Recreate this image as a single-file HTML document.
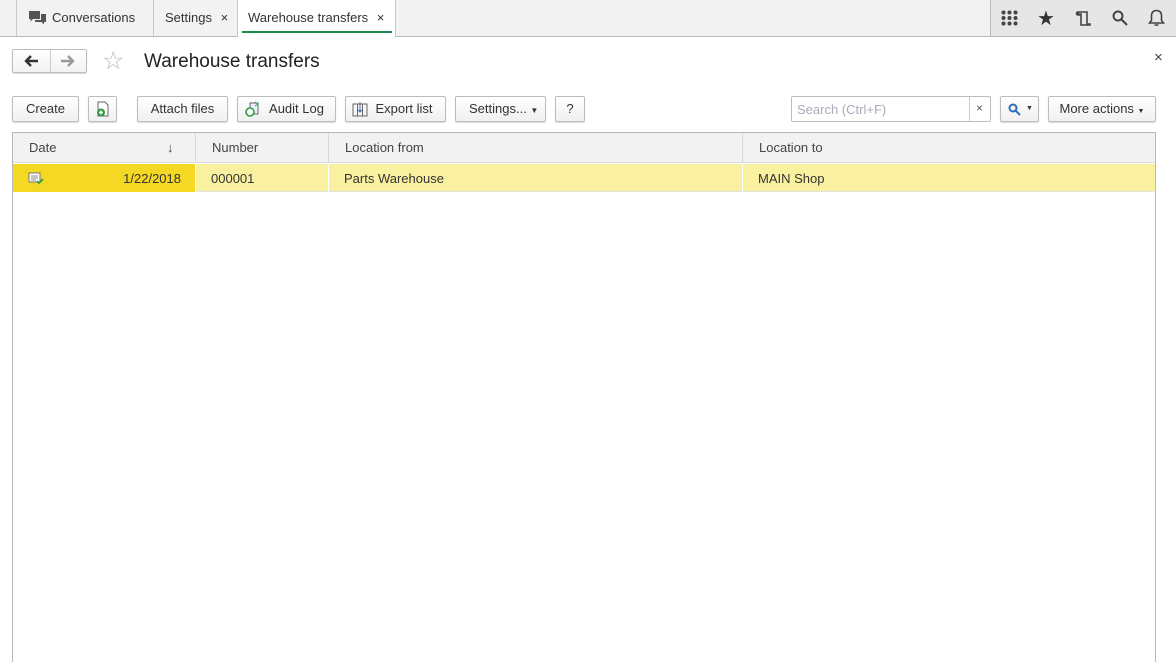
<!DOCTYPE html>
<html><head><meta charset="utf-8"><style>
*{box-sizing:border-box;margin:0;padding:0}
html,body{width:1176px;height:662px;overflow:hidden}
body{background:#fff;font-family:"Liberation Sans",Arial,sans-serif;font-size:13px;color:#333;position:relative}
.abs{position:absolute}
.tabbar{left:0;top:0;width:1176px;height:37px;background:#f2f2f2;border-bottom:1px solid #b8b8b8}
.tab{top:0;height:36px;line-height:35px;font-size:13px;color:#333;border-left:1px solid #c8c8c8;padding-left:10px}
.btn{top:96px;height:26px;border:1px solid #bdbdbd;border-radius:2px;background:linear-gradient(#fff,#f0f0f0);box-shadow:0 1px 1px rgba(0,0,0,.15);line-height:24px;text-align:center;font-size:13px;color:#333}
.th{top:133px;height:30px;line-height:29px;color:#444;border-right:1px solid #d8d8d8;padding-left:16px}
.td{top:164px;height:28px;line-height:29px;color:#333;border-right:1px solid #fff;padding-left:15px}
</style></head><body>
<div class="abs tabbar"></div>
<div class="abs tab" style="left:16px;width:138px;padding-left:12px">
<svg class="abs" style="left:12px;top:10px" width="17" height="16" viewBox="0 0 17 16"><path d="M0 1h11v8H4l-2.5 2.5V9H0z" fill="#555"/><path d="M12 4h5v8h-2v2.5L12.5 12H6v-2h6z" fill="#555"/></svg>
<span style="margin-left:23px">Conversations</span></div>
<div class="abs tab" style="left:153px;width:85px;padding-left:11px">Settings <span style="margin-left:5px">×</span></div>
<div class="abs tab" style="left:237px;width:159px;background:#fff;border-right:1px solid #c8c8c8;height:37px">Warehouse transfers <span style="margin-left:5px">×</span>
<div class="abs" style="left:4px;top:31px;width:150px;height:2px;background:#1e8c4e"></div></div>
<div class="abs" style="left:990px;top:0;width:186px;height:36px;background:#e6e6e6;border-left:1px solid #b8b8b8"></div>
<svg class="abs" style="left:1001px;top:10px" width="17" height="16" viewBox="0 0 17 16" fill="#444"><circle cx="2.5" cy="2.5" r="2"/><circle cx="8.5" cy="2.5" r="2"/><circle cx="14.5" cy="2.5" r="2"/><circle cx="2.5" cy="8" r="2"/><circle cx="8.5" cy="8" r="2"/><circle cx="14.5" cy="8" r="2"/><circle cx="2.5" cy="13.5" r="2"/><circle cx="8.5" cy="13.5" r="2"/><circle cx="14.5" cy="13.5" r="2"/></svg>
<div class="abs" style="left:1037px;top:6px;font-size:20px;color:#333">★</div>
<svg class="abs" style="left:1075px;top:10px" width="17" height="17" viewBox="0 0 17 17" fill="none" stroke="#444" stroke-width="1.6"><path d="M3 2h9v12h3v1H6V4H3zM3 2a1.5 1.5 0 0 0 0 3h3"/></svg>
<svg class="abs" style="left:1112px;top:10px" width="16" height="16" viewBox="0 0 16 16" fill="none" stroke="#444" stroke-width="2"><circle cx="6" cy="6" r="4.5"/><path d="M9.5 9.5L15 15"/></svg>
<svg class="abs" style="left:1148px;top:9px" width="17" height="18" viewBox="0 0 17 18" fill="none" stroke="#444" stroke-width="1.6"><path d="M8.5 1.5c-3 0-5 2-5 5v5l-2 2.5h14l-2-2.5v-5c0-3-2-5-5-5zM6.5 16h4"/></svg>

<div class="abs" style="left:12px;top:49px;width:75px;height:24px;border:1px solid #bdbdbd;border-radius:2px;background:linear-gradient(#fff,#f2f2f2);box-shadow:0 1px 1px rgba(0,0,0,.15)"><div class="abs" style="left:37px;top:0;width:1px;height:22px;background:#ccc"></div></div>
<svg class="abs" style="left:24px;top:55px" width="15" height="12" viewBox="0 0 15 12"><path d="M2 6h12M7 1L2 6l5 5" stroke="#333" stroke-width="2.4" fill="none"/></svg>
<svg class="abs" style="left:60px;top:55px" width="15" height="12" viewBox="0 0 15 12"><path d="M1 6h12M8 1l5 5-5 5" stroke="#999" stroke-width="2.4" fill="none"/></svg>
<div class="abs" style="left:102px;top:46px;font-size:25px;color:#bbb">☆</div>
<div class="abs" style="left:144px;top:51px;font-size:19px;color:#222">Warehouse transfers</div>
<div class="abs" style="left:1154px;top:49px;font-size:15px;color:#444">×</div>

<div class="abs btn" style="left:12px;width:67px">Create</div>
<div class="abs btn" style="left:88px;width:29px"><svg style="margin-top:4px" width="14" height="16" viewBox="0 0 14 16"><path d="M2 1h7l3 3v11H2z" fill="#fff" stroke="#666"/><circle cx="5" cy="11.5" r="4" fill="#2e9e3e"/><path d="M5 9.5v4M3 11.5h4" stroke="#fff" stroke-width="1.4"/></svg></div>
<div class="abs btn" style="left:137px;width:91px">Attach files</div>
<div class="abs btn" style="left:237px;width:99px;padding-left:20px">Audit Log<svg class="abs" style="left:7px;top:4px" width="16" height="16" viewBox="0 0 16 16"><path d="M5 2h8v11H5z" fill="#eef" stroke="#666"/><circle cx="5" cy="11" r="4" fill="#fff" stroke="#2e9e3e" stroke-width="1.6"/><path d="M10 1l3 2-3 2" stroke="#2e9e3e" fill="none"/></svg></div>
<div class="abs btn" style="left:345px;width:101px;padding-left:17px">Export list<svg class="abs" style="left:6px;top:4px" width="16" height="16" viewBox="0 0 16 16" fill="none" stroke="#666"><path d="M1 3h14v12H1zM5.5 3v12M10.5 3v12"/><path d="M8 1v10M6 9l2 2 2-2" stroke="#3a6ea5"/></svg></div>
<div class="abs btn" style="left:455px;width:91px;text-align:left;padding-left:13px">Settings... <span style="font-size:8px">▼</span></div>
<div class="abs btn" style="left:555px;width:30px">?</div>

<div class="abs" style="left:791px;top:96px;width:200px;height:26px;border:1px solid #bdbdbd;border-radius:2px;background:#fff"><span class="abs" style="left:5px;top:5px;color:#aab">Search (Ctrl+F)</span><div class="abs" style="left:177px;top:0;width:1px;height:24px;background:#ccc"></div><span class="abs" style="left:184px;top:4px;font-size:12px;color:#555">×</span></div>
<div class="abs btn" style="left:1000px;width:39px"><svg class="abs" style="left:7px;top:6px" width="13" height="13" viewBox="0 0 13 13" fill="none" stroke="#2d6db5" stroke-width="2"><circle cx="5" cy="5" r="3.5"/><path d="M7.5 7.5L12 12"/></svg><span class="abs" style="left:25px;top:0;font-size:7px">▼</span></div>
<div class="abs btn" style="left:1048px;width:108px">More actions <span style="font-size:7px">▼</span></div>

<div class="abs" style="left:12px;top:132px;width:1144px;height:530px;border:1px solid #b8b8b8;border-bottom:none"></div>
<div class="abs" style="left:13px;top:133px;width:1142px;height:30px;background:#f2f2f2;border-bottom:1px solid #ddd"></div>
<div class="abs th" style="left:13px;width:183px">Date<span class="abs" style="left:154px;top:0">↓</span></div>
<div class="abs th" style="left:196px;width:133px">Number</div>
<div class="abs th" style="left:329px;width:414px">Location from</div>
<div class="abs th" style="left:743px;width:412px;border-right:none">Location to</div>
<div class="abs" style="left:13px;top:164px;width:1142px;height:28px;background:#faf1a0;border-bottom:1px solid #e2e2e2"></div>
<div class="abs td" style="left:13px;width:183px;background:#f5d823;text-align:right;padding-right:14px">1/22/2018<svg class="abs" style="left:15px;top:8px" width="16" height="13" viewBox="0 0 16 13"><path d="M1 1h11v9H1z" fill="#fff" stroke="#777"/><path d="M3 4h7M3 6h7M3 8h5" stroke="#888"/><path d="M9 9l2 2 4-4" stroke="#2e9e3e" stroke-width="1.8" fill="none"/></svg></div>
<div class="abs td" style="left:196px;width:133px">000001</div>
<div class="abs td" style="left:329px;width:414px">Parts Warehouse</div>
<div class="abs td" style="left:743px;width:412px;border-right:none">MAIN Shop</div>
</body></html>
